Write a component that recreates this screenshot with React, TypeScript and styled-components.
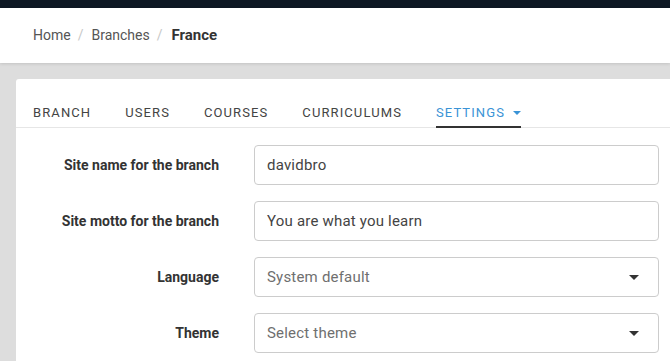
import React from 'react'
import styled, { createGlobalStyle } from 'styled-components'

const GlobalStyle = createGlobalStyle`
  html, body {
    margin: 0;
    padding: 0;
    background: #dddddd;
    font-family: Roboto, "Liberation Sans", Arial, sans-serif;
    overflow: hidden;
  }
  * { box-sizing: border-box; }
`

const tabs = ['Branch', 'Users', 'Courses', 'Curriculums', 'Settings']

const fields = [
  { label: 'Site name for the branch', value: 'davidbro', select: false },
  { label: 'Site motto for the branch', value: 'You are what you learn', select: false },
  { label: 'Language', value: 'System default', select: true },
  { label: 'Theme', value: 'Select theme', select: true },
]

const App = () => {
  return (
    <>
      <GlobalStyle />
      <TopBar />
      <Header>
        <Crumb>Home</Crumb>
        <Sep>/</Sep>
        <Crumb>Branches</Crumb>
        <Sep>/</Sep>
        <Current>France</Current>
      </Header>
      <Page>
        <Card>
          <TabBar>
            {tabs.map((t) => (
              <Tab key={t} active={t === 'Settings'}>
                {t}
                {t === 'Settings' && <Caret color="#3a93d6" size={4} />}
              </Tab>
            ))}
          </TabBar>
          <Form>
            {fields.map((f) => (
              <Row key={f.label}>
                <Label>{f.label}</Label>
                <Field muted={f.select}>
                  {f.value}
                  {f.select && <Caret color="#333" size={5} />}
                </Field>
              </Row>
            ))}
          </Form>
        </Card>
      </Page>
    </>
  )
}

const TopBar = styled.div`
  height: 8px;
  background: #0e1824;
`

const Header = styled.div`
  height: 55px;
  background: #fff;
  display: flex;
  align-items: center;
  padding: 0 0 2px 33px;
  box-shadow: 0 1px 3px rgba(0, 0, 0, 0.12);
  position: relative;
  z-index: 1;
`

const Crumb = styled.span`
  font-size: 14px;
  color: #555;
`

const Sep = styled.span`
  font-size: 14px;
  color: #c8c8c8;
  margin: 0 8px 0 7px;
`

const Current = styled.span`
  font-size: 15px;
  font-weight: 700;
  color: #333;
  margin-left: 1px;
`

const Page = styled.div`
  padding: 16px 0 0 16px;
`

const Card = styled.div`
  background: #fff;
  border-radius: 3px 0 0 0;
  min-height: 300px;
`

const TabBar = styled.div`
  display: flex;
  padding-left: 17px;
  border-bottom: 1px solid #e6e6e6;
`

const Tab = styled.div<{ active?: boolean }>`
  display: flex;
  align-items: center;
  gap: 8px;
  padding: 26px 0 6px;
  line-height: 15px;
  margin-right: 34px;
  font-size: 13px;
  letter-spacing: 1.1px;
  text-transform: uppercase;
  color: ${(p) => (p.active ? '#3a93d6' : '#444')};
  border-bottom: 2px solid ${(p) => (p.active ? '#333' : 'transparent')};
  margin-bottom: -1px;
`

const Caret = styled.span<{ color: string; size: number }>`
  width: 0;
  height: 0;
  border-left: ${(p) => p.size}px solid transparent;
  border-right: ${(p) => p.size}px solid transparent;
  border-top: ${(p) => p.size}px solid ${(p) => p.color};
`

const Form = styled.div`
  display: flex;
  flex-direction: column;
  gap: 16px;
  padding-top: 17px;
`

const Row = styled.div`
  display: grid;
  grid-template-columns: 203px 405px;
  column-gap: 35px;
  align-items: center;
`

const Label = styled.div`
  text-align: right;
  font-size: 14px;
  font-weight: 700;
  color: #333;
`

const Field = styled.div<{ muted?: boolean }>`
  height: 40px;
  display: flex;
  align-items: center;
  justify-content: space-between;
  padding: 0 19px 0 12px;
  border: 1px solid #ccc;
  border-radius: 4px;
  font-size: 15px;
  letter-spacing: 0.2px;
  color: ${(p) => (p.muted ? '#6f6f6f' : '#444')};
`

export default App
